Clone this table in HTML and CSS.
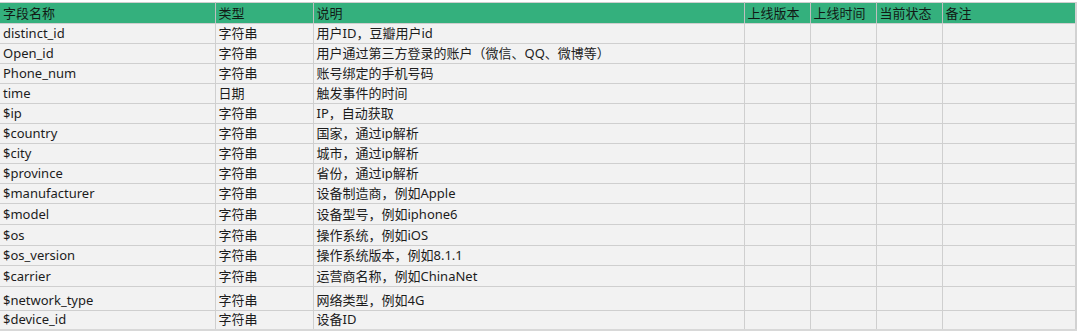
FILE: index.html
```html
<!DOCTYPE html>
<html lang="zh-CN">
<head>
<meta charset="utf-8">
<title>字段说明</title>
<link rel="stylesheet" href="styles.css">
</head>
<body>
<div class="sheet">
<table class="grid">
<colgroup>
<col class="c1"><col class="c2"><col class="c3"><col class="c4"><col class="c5"><col class="c6"><col class="c7">
</colgroup>
<thead>
<tr class="head"><th>字段名称</th><th>类型</th><th>说明</th><th>上线版本</th><th>上线时间</th><th>当前状态</th><th>备注</th></tr>
</thead>
<tbody>
<tr><td>distinct_id</td><td>字符串</td><td>用户ID，豆瓣用户id</td><td></td><td></td><td></td><td></td></tr>
<tr><td>Open_id</td><td>字符串</td><td>用户通过第三方登录的账户（微信、QQ、微博等）</td><td></td><td></td><td></td><td></td></tr>
<tr><td>Phone_num</td><td>字符串</td><td>账号绑定的手机号码</td><td></td><td></td><td></td><td></td></tr>
<tr><td>time</td><td>日期</td><td>触发事件的时间</td><td></td><td></td><td></td><td></td></tr>
<tr><td>$ip</td><td>字符串</td><td>IP，自动获取</td><td></td><td></td><td></td><td></td></tr>
<tr><td>$country</td><td>字符串</td><td>国家，通过ip解析</td><td></td><td></td><td></td><td></td></tr>
<tr><td>$city</td><td>字符串</td><td>城市，通过ip解析</td><td></td><td></td><td></td><td></td></tr>
<tr><td>$province</td><td>字符串</td><td>省份，通过ip解析</td><td></td><td></td><td></td><td></td></tr>
<tr><td>$manufacturer</td><td>字符串</td><td>设备制造商，例如Apple</td><td></td><td></td><td></td><td></td></tr>
<tr class="r21"><td>$model</td><td>字符串</td><td>设备型号，例如iphone6</td><td></td><td></td><td></td><td></td></tr>
<tr class="r21"><td>$os</td><td>字符串</td><td>操作系统，例如iOS</td><td></td><td></td><td></td><td></td></tr>
<tr><td>$os_version</td><td>字符串</td><td>操作系统版本，例如8.1.1</td><td></td><td></td><td></td><td></td></tr>
<tr class="r21"><td>$carrier</td><td>字符串</td><td>运营商名称，例如ChinaNet</td><td></td><td></td><td></td><td></td></tr>
<tr class="r24"><td>$network_type</td><td>字符串</td><td>网络类型，例如4G</td><td></td><td></td><td></td><td></td></tr>
<tr class="r19"><td>$device_id</td><td>字符串</td><td>设备ID</td><td></td><td></td><td></td><td></td></tr>
</tbody>
</table>
</div>
</body>
</html>
```
FILE: styles.css
```css
html, body {
  margin: 0;
  padding: 0;
  background: #ffffff;
}
body {
  font-family: "Noto Sans", "Noto Sans CJK SC", sans-serif;
  font-size: 13px;
  color: #1c1c1c;
}
.sheet {
  padding-top: 2px;
}
.grid {
  border-collapse: collapse;
  table-layout: fixed;
  width: 1076px;
}
.c1 { width: 215px; }
.c2 { width: 98px; }
.c3 { width: 431px; }
.c4 { width: 66px; }
.c5 { width: 66px; }
.c6 { width: 66px; }
.c7 { width: 134px; }
.grid th,
.grid td {
  border: 1px solid #cfcfcf;
  border-left: none;
  padding: 0 3px 1px 3px;
  height: 19px;
  line-height: 17px;
  vertical-align: bottom;
  text-align: left;
  white-space: nowrap;
  overflow: hidden;
  font-weight: normal;
  box-sizing: border-box;
}
.grid td:last-child,
.grid th:last-child {
  border-right: 2px solid #d2d2d2;
}
.grid td {
  background: #f2f2f2;
  height: 20px;
}
.head th {
  background: #34b07d;
  color: #121a15;
  height: 21px;
  border-top: 1px solid #cfcfcf;
  border-right-color: #bfbfbf;
}
.grid tr.r21 td { height: 21px; }
.grid tr.r24 td { height: 24px; }
.grid tr.r19 td { height: 19px; border-bottom: 2px solid #d8d8d8; }
```
